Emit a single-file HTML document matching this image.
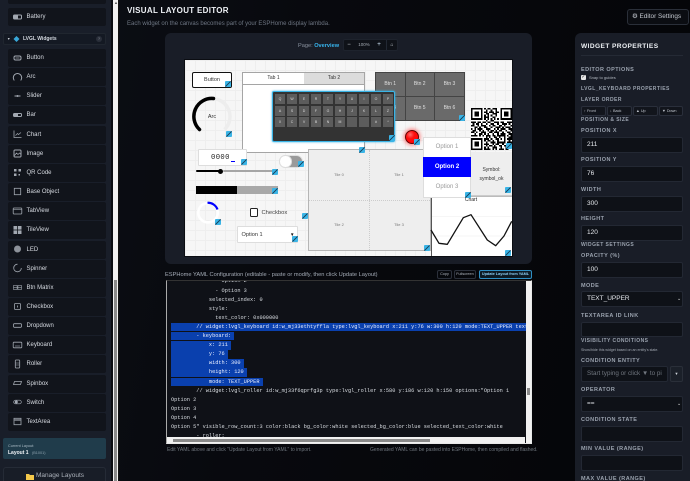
<!DOCTYPE html>
<html><head><meta charset="utf-8">
<style>
*{box-sizing:border-box}
html,body{margin:0;padding:0;width:690px;height:481px;overflow:hidden;background:#06070b;font-family:"Liberation Sans",sans-serif}
#r{position:relative;width:690px;height:481px;overflow:hidden;background:linear-gradient(100deg,#0c1016 0,#08090e 40%,#040508 100%);filter:blur(.22px)}
.a,.t,.h{position:absolute}
.t{line-height:10px;height:10px;white-space:nowrap}
.c{text-align:center}
#side{left:0;top:0;width:111px;height:481px;background:#191e29}
.row{position:absolute;left:8px;width:98px;height:18px;background:#11141b;border-radius:2px;color:#d6dae1;font-size:6px;line-height:18px;padding-left:18.5px}
.h{width:6px;height:6px;background:linear-gradient(135deg,#3ab4e6 0,#3ab4e6 42%,#1c4a66 42%,#1c4a66 58%,#3ab4e6 58%,#3ab4e6 100%);border-radius:1px;z-index:9;margin:-3px 0 0 -3px}
.tile{position:absolute;color:#777;font-size:4px;line-height:6px;width:40px;margin-left:-20px;text-align:center}
.key{position:absolute;width:10px;height:10px;background:#5c5c5c;color:#ddd;font-size:3.5px;line-height:10px;text-align:center}
.bm{position:absolute;background:#6a6a6a;color:#e0e0e0;font-size:5px;text-align:center}
.lab{color:#9aa2ae;font-size:5.5px;font-weight:bold;letter-spacing:.45px;left:581px}
.inp{position:absolute;left:581px;width:102px;background:#0e1117;border:1px solid #232833;border-radius:2px;color:#e4e7ec;font-size:6.5px;padding-left:5px}
.ob{position:absolute;top:106px;height:10px;background:#12151c;border:1px solid #2a2f3b;border-radius:2px;color:#bfc4cc;font-size:3.8px;line-height:8px;padding-left:2px}
.l{position:absolute;left:170px;height:9px;line-height:9px;white-space:pre;font-family:"Liberation Mono",monospace;font-size:5.27px;color:#d9dde2}
.s{background:#0a40ae;color:#e8eeff;display:inline-block;height:8.6px}
.yb{position:absolute;top:270px;height:9px;border:1px solid #2b303b;border-radius:2px;color:#aeb4bd;font-size:3.8px;line-height:7px;text-align:center}
</style></head><body><div id="r">

<!-- Sidebar -->
<div class="a" id="side"></div>
<div class="a" style="left:8px;top:0;width:98px;height:4px;background:#11141b;border-radius:0 0 2px 2px"></div>
<div class="a" style="left:111px;top:0;width:2px;height:481px;background:#0a0c11"></div>
<div class="a" style="left:113px;top:0;width:5px;height:481px;background:#f1f1f1"></div>
<div class="a" style="left:114px;top:280px;width:3px;height:201px;background:#8a8a8a"></div>
<div class="a" style="left:118px;top:0;width:1px;height:481px;background:#111"></div>
<div class="t" style="left:114px;top:-2px;font-size:4px;color:#555">▲</div>

<div class="row" style="top:8px">Battery</div>
<div class="a" style="left:3px;top:33px;width:103px;height:12px;background:#141923;border:1px solid #20262f;border-radius:2px"></div>
<div class="t" style="left:7px;top:34px;font-size:3.5px;color:#cfd4da">▼</div>
<svg class="a" style="left:13px;top:36px" width="7" height="6"><path d="M3.5 0L6.5 3 3.5 6 .5 3z" fill="#38a7d8"/></svg>
<div class="t" style="left:23px;top:34px;font-size:5px;font-weight:bold;color:#d2d7de">LVGL Widgets</div>
<div class="a" style="left:96px;top:36px;width:6px;height:6px;border-radius:3px;background:#2a2f3a;color:#8a909a;font-size:4px;line-height:6px;text-align:center">?</div>

<div class="row" style="top:49px">Button</div>
<div class="row" style="top:68.15px">Arc</div>
<div class="row" style="top:87.3px">Slider</div>
<div class="row" style="top:106.45px">Bar</div>
<div class="row" style="top:125.6px">Chart</div>
<div class="row" style="top:144.75px">Image</div>
<div class="row" style="top:163.9px">QR Code</div>
<div class="row" style="top:183.05px">Base Object</div>
<div class="row" style="top:202.2px">TabView</div>
<div class="row" style="top:221.35px">TileView</div>
<div class="row" style="top:240.5px">LED</div>
<div class="row" style="top:259.65px">Spinner</div>
<div class="row" style="top:278.8px">Btn Matrix</div>
<div class="row" style="top:297.95px">Checkbox</div>
<div class="row" style="top:317.1px">Dropdown</div>
<div class="row" style="top:336.25px">Keyboard</div>
<div class="row" style="top:355.4px">Roller</div>
<div class="row" style="top:374.55px">Spinbox</div>
<div class="row" style="top:393.7px">Switch</div>
<div class="row" style="top:412.85px">TextArea</div>

<svg class="a" style="left:0;top:0;z-index:3" width="111" height="481" fill="none" stroke="#a2a8b1" stroke-width="1">
<g transform="translate(17.5,17)"><rect x="-4" y="-2" width="8" height="4" rx="1"/><rect x="-3.5" y="-1.5" width="4" height="3" fill="#a2a8b1" stroke="none"/></g>
<g transform="translate(17.5,58)"><rect x="-3.5" y="-2" width="7" height="4" rx="1.5"/><path d="M-2 0h4" stroke-width=".7"/></g>
<g transform="translate(17.5,77)"><path d="M-3.2 3.4A4.2 4.2 0 1 1 3.2 3.4"/></g>
<g transform="translate(17.5,96)"><path d="M-3 0h6"/><circle cx="0" cy="0" r="1" fill="#a2a8b1" stroke="none"/></g>
<g transform="translate(17.5,115)"><rect x="-4" y="-1.5" width="8" height="3" rx="1"/><rect x="-3.5" y="-1" width="4" height="2" fill="#a2a8b1" stroke="none"/></g>
<g transform="translate(17.5,134)"><path d="M-3.5-3.5V3.5H4" stroke-width=".8"/><path d="M-2 1.5L0-.5 1 .5 3.5-1.5" stroke-width=".7"/></g>
<g transform="translate(17.5,153.5)"><rect x="-3.5" y="-3.5" width="7" height="7" rx="1"/><path d="M-3 2L-1-.5 .5 1 2-.5 3.5 1" stroke-width=".7"/></g>
<g transform="translate(17.5,172.5)" fill="#a2a8b1" stroke="none"><rect x="-3.5" y="-3.5" width="2.5" height="2.5"/><rect x="1" y="-3.5" width="2.5" height="2.5"/><rect x="-3.5" y="1" width="2.5" height="2.5"/><rect x="1" y="1.5" width="1.5" height="1.5"/></g>
<g transform="translate(17.5,191.5)"><rect x="-3.2" y="-3.2" width="6.4" height="6.4" stroke-width=".8"/></g>
<g transform="translate(17.5,211)"><rect x="-4.3" y="-3" width="8.6" height="6" rx=".7" stroke-width=".8"/><path d="M-4-1.5h8" stroke-width=".6"/></g>
<g transform="translate(17.5,230)" fill="#a2a8b1" stroke="none"><rect x="-4" y="-4" width="3.6" height="3.6"/><rect x=".4" y="-4" width="3.6" height="3.6"/><rect x="-4" y=".4" width="3.6" height="3.6"/><rect x=".4" y=".4" width="3.6" height="3.6"/></g>
<g transform="translate(17.5,249)"><circle r="3.5" fill="#8d929a" stroke="none"/></g>
<g transform="translate(17.5,268)"><path d="M0-3.8A3.8 3.8 0 1 0 3.8 0" stroke-width=".8"/></g>
<g transform="translate(17.5,287.5)" stroke-width=".6"><rect x="-4" y="-2" width="3.6" height="4"/><rect x=".4" y="-2" width="3.6" height="4"/><path d="M-4 0h8"/></g>
<g transform="translate(17.5,306.5)"><rect x="-3" y="-3" width="6" height="6" rx=".8" stroke-width=".8"/><path d="M0 1V-1" stroke-width=".8"/></g>
<g transform="translate(17.5,325.5)"><rect x="-4" y="-1.8" width="8" height="3.6" rx="1" stroke-width=".8"/></g>
<g transform="translate(17.5,345)"><rect x="-4.3" y="-2.8" width="8.6" height="5.6" rx=".7" stroke-width=".8"/><path d="M-2.5 1h5" stroke-width=".6"/></g>
<g transform="translate(17.5,364)"><rect x="-2.2" y="-4" width="4.4" height="8" rx=".7" stroke-width=".8"/><path d="M-2-1h4M-2 1h4" stroke-width=".5"/></g>
<g transform="translate(17.5,383)"><path d="M-3-1.5H4L3 1.5H-4z" stroke-width=".8"/></g>
<g transform="translate(17.5,402)"><rect x="-3.8" y="-1.8" width="7.6" height="3.6" rx="1.8" stroke-width=".7"/><circle cx="-1.2" r="1.5" fill="#a2a8b1" stroke="none"/></g>
<g transform="translate(17.5,421.5)"><rect x="-3.5" y="-3.2" width="7" height="6.4" stroke-width=".8"/><path d="M-3-1.5h6" stroke-width="1.2"/></g>
</svg>

<div class="a" style="left:3px;top:438px;width:103px;height:21px;background:#203c4b;border-radius:2px"></div>
<div class="t" style="left:8px;top:441px;font-size:3.8px;color:#a9bac4">Current Layout:</div>
<div class="t" style="left:8px;top:448px;font-size:5px;font-weight:bold;color:#eef2f5">Layout 1 <span style="font-weight:normal;font-size:3.8px;color:#8da2ae;margin-left:2px">(B1001)</span></div>
<div class="a" style="left:3px;top:467px;width:103px;height:20px;background:#181d27;border:1px solid #252b36;border-radius:3px"></div>
<svg class="a" style="left:26px;top:473px" width="8" height="7"><path d="M0 1h3l1 1h4v5H0z" fill="#f4c84a"/></svg>
<div class="t" style="left:36px;top:471px;font-size:6.5px;color:#aab0b9">Manage Layouts</div>

<!-- Header -->
<div class="t" style="left:127px;top:6px;font-size:8px;font-weight:bold;color:#eef1f5;letter-spacing:.3px">VISUAL LAYOUT EDITOR</div>
<div class="t" style="left:127px;top:19px;font-size:6px;color:#6d7582">Each widget on the canvas becomes part of your ESPHome display lambda.</div>

<!-- Center panel -->
<div class="a" style="left:165px;top:33px;width:367px;height:231px;background:#191d27;border-radius:6px"></div>
<div class="t" style="left:298px;top:40.5px;font-size:5.6px;color:#8b93a0">Page: <b style="color:#38b6f0">Overview</b></div>
<div class="a" style="left:343px;top:39px;width:55px;height:12px;background:#0f1218;border-radius:2px;border:1px solid #1e232d"></div>
<div class="t c" style="left:345px;top:40px;width:8px;font-size:6px;color:#cfd4da">−</div>
<div class="t c" style="left:355px;top:40px;width:18px;font-size:4.5px;color:#a5abb3">100%</div>
<div class="t c" style="left:375px;top:40px;width:8px;font-size:6.5px;color:#cfe4f5">+</div>
<div class="a" style="left:386px;top:40px;width:1px;height:10px;background:#222833"></div>
<div class="t c" style="left:388px;top:40px;width:8px;font-size:5px;color:#cfd4da">⌂</div>

<!-- Canvas -->
<div class="a" style="left:185px;top:60px;width:327px;height:196px;background-color:#f6f6f6;background-image:linear-gradient(#eeeeee 1px,transparent 1px),linear-gradient(90deg,#eeeeee 1px,transparent 1px);background-size:10px 10px;outline:1px solid #0b0d12"></div>

<!-- Button -->
<div class="a c" style="left:192px;top:72px;width:40px;height:16px;background:#fff;border:1px solid #111;border-bottom-width:1.5px;border-right-width:1.5px;border-radius:2px;color:#333;font-size:5.5px;line-height:14px">Button</div>
<div class="t c" style="left:192px;top:111.5px;width:40px;font-size:5.5px;color:#333">Arc</div>

<!-- Tabview -->
<div class="a" style="left:242px;top:72px;width:123px;height:81px;background:#fff;border:1px solid #a5a5a5"></div>
<div class="a c" style="left:243px;top:73px;width:61px;height:11px;background:#fff;color:#333;font-size:5px;line-height:11px">Tab 1</div>
<div class="a c" style="left:304px;top:73px;width:60px;height:11px;background:#dcdcdc;color:#333;font-size:5px;line-height:11px">Tab 2</div>
<div class="a" style="left:243px;top:84px;width:121px;height:1px;background:#a5a5a5"></div>

<!-- Btn matrix -->
<div class="a" style="left:375px;top:72px;width:90px;height:49px;background:#444"></div>
<div class="bm" style="left:376px;top:73px;width:28.5px;height:23px;line-height:23px">Btn 1</div>
<div class="bm" style="left:405.5px;top:73px;width:28.5px;height:23px;line-height:23px">Btn 2</div>
<div class="bm" style="left:435px;top:73px;width:29px;height:23px;line-height:23px">Btn 3</div>
<div class="bm" style="left:376px;top:97px;width:28.5px;height:23px;line-height:23px">Btn 4</div>
<div class="bm" style="left:405.5px;top:97px;width:28.5px;height:23px;line-height:23px">Btn 5</div>
<div class="bm" style="left:435px;top:97px;width:29px;height:23px;line-height:23px">Btn 6</div>

<!-- Keyboard -->
<div class="a" style="left:272px;top:91px;width:123px;height:51px;background:#333;border:1px solid #3ab4e6;border-radius:2px;box-shadow:0 0 2px #3ab4e6;z-index:2">
<div class="key" style="left:2px;top:2px">Q</div><div class="key" style="left:14px;top:2px">W</div><div class="key" style="left:26px;top:2px">E</div><div class="key" style="left:38px;top:2px">R</div><div class="key" style="left:50px;top:2px">T</div><div class="key" style="left:62px;top:2px">Y</div><div class="key" style="left:74px;top:2px">U</div><div class="key" style="left:86px;top:2px">I</div><div class="key" style="left:98px;top:2px">O</div><div class="key" style="left:110px;top:2px">P</div>
<div class="key" style="left:2px;top:13.5px">A</div><div class="key" style="left:14px;top:13.5px">S</div><div class="key" style="left:26px;top:13.5px">D</div><div class="key" style="left:38px;top:13.5px">F</div><div class="key" style="left:50px;top:13.5px">G</div><div class="key" style="left:62px;top:13.5px">H</div><div class="key" style="left:74px;top:13.5px">J</div><div class="key" style="left:86px;top:13.5px">K</div><div class="key" style="left:98px;top:13.5px">L</div><div class="key" style="left:110px;top:13.5px">Z</div>
<div class="key" style="left:2px;top:25px">X</div><div class="key" style="left:14px;top:25px">C</div><div class="key" style="left:26px;top:25px">V</div><div class="key" style="left:38px;top:25px">B</div><div class="key" style="left:50px;top:25px">N</div><div class="key" style="left:62px;top:25px">M</div><div class="key" style="left:74px;top:25px"></div><div class="key" style="left:86px;top:25px"></div><div class="key" style="left:98px;top:25px">#</div><div class="key" style="left:110px;top:25px">*</div>
</div>

<!-- LED -->
<div class="a" style="left:404.5px;top:130px;width:14px;height:14px;border-radius:50%;background:radial-gradient(circle at 35% 30%,#ff6a6a 0,#ff1010 35%,#f00 100%);border:.5px solid #600;box-shadow:0 0 4px 1px rgba(255,0,0,.55)"></div>

<!-- QR -->
<svg class="a" style="left:471px;top:108px;background:#fff" width="41" height="42" viewBox="0 0 25 25" preserveAspectRatio="none" shape-rendering="crispEdges">
<path fill-rule="evenodd" d="M0 0h7v7H0zM1 1v5h5V1zM2 2h3v3H2zM18 0h7v7h-7zM19 1v5h5V1zM20 2h3v3h-3zM0 18h7v7H0zM1 19v5h5v-5zM2 20h3v3H2z"/>
<path stroke="#000" stroke-width="1" fill="none" d="M8 .5h1M10 .5h2M13 .5h3M9 1.5h1M12 1.5h1M15 1.5h1M8 2.5h2M11 2.5h3M15 2.5h2M9 3.5h2M13 3.5h3M8 4.5h1M10 4.5h1M12 4.5h1M15 4.5h1M8 5.5h3M13 5.5h2M8 6.5h1M10 6.5h1M12 6.5h1M14 6.5h1M16 6.5h1M9 7.5h1M12 7.5h2M0 8.5h3M4 8.5h2M7 8.5h2M10 8.5h2M14 8.5h3M18 8.5h2M22 8.5h3M1 9.5h1M3 9.5h2M6 9.5h1M9 9.5h1M12 9.5h2M16 9.5h1M19 9.5h3M23 9.5h1M0 10.5h2M4 10.5h1M6 10.5h3M11 10.5h1M13 10.5h2M17 10.5h2M20 10.5h1M24 10.5h1M2 11.5h2M5 11.5h1M8 11.5h2M12 11.5h1M15 11.5h3M19 11.5h1M21 11.5h3M0 12.5h1M2 12.5h1M4 12.5h3M9 12.5h3M14 12.5h1M16 12.5h1M18 12.5h3M23 12.5h2M1 13.5h2M5 13.5h1M7 13.5h1M10 13.5h1M12 13.5h2M15 13.5h1M17 13.5h2M21 13.5h1M24 13.5h1M0 14.5h2M3 14.5h1M6 14.5h3M11 14.5h2M14 14.5h3M19 14.5h1M22 14.5h2M2 15.5h1M5 15.5h2M8 15.5h1M10 15.5h1M13 15.5h1M16 15.5h1M18 15.5h3M23 15.5h2M0 16.5h4M5 16.5h1M7 16.5h1M9 16.5h3M13 16.5h2M16 16.5h5M22 16.5h1M24 16.5h1M9 17.5h1M11 17.5h1M14 17.5h2M17 17.5h1M20 17.5h1M23 17.5h2M8 18.5h3M12 18.5h1M15 18.5h2M18 18.5h1M20 18.5h1M22 18.5h3M8 19.5h1M10 19.5h2M13 19.5h1M16 19.5h1M20 19.5h1M23 19.5h1M9 20.5h1M12 20.5h3M16 20.5h5M22 20.5h3M8 21.5h3M13 21.5h1M15 21.5h2M19 21.5h1M22 21.5h1M9 22.5h1M11 22.5h2M14 22.5h1M17 22.5h2M20 22.5h3M24 22.5h1M8 23.5h1M10 23.5h1M13 23.5h3M18 23.5h1M21 23.5h1M23 23.5h2M8 24.5h4M13 24.5h1M15 24.5h1M17 24.5h3M21 24.5h2"/>
</svg>

<!-- Spinbox, switch, slider, bar -->
<div class="a" style="left:198px;top:149px;width:49px;height:17px;background:#fff;border:1px solid #ddd;border-radius:1px"></div>
<div class="t" style="left:211px;top:153px;font-family:'Liberation Mono',monospace;font-size:7.2px;color:#222;letter-spacing:.4px">0000</div>
<div class="a" style="left:231px;top:161px;width:4px;height:.8px;background:#00f"></div>
<div class="a" style="left:279px;top:155px;width:24px;height:13px;border-radius:6.5px;background:#9a9a9a;border:1px solid #e0e0e0"></div>
<div class="a" style="left:279px;top:155px;width:12.5px;height:12.5px;border-radius:50%;background:#fff;border:.5px solid #ddd"></div>
<div class="a" style="left:196px;top:170.2px;width:25px;height:1.8px;background:#000;border-radius:1px"></div>
<div class="a" style="left:223px;top:170.2px;width:52px;height:1.8px;background:#a5a5a5;border-radius:1px"></div>
<div class="a" style="left:218px;top:168.5px;width:5px;height:5px;border-radius:50%;background:#000"></div>
<div class="a" style="left:196px;top:186px;width:41px;height:8px;background:#000"></div>
<div class="a" style="left:237px;top:186px;width:41px;height:8px;background:#a8a8a8"></div>

<!-- Checkbox -->
<div class="a" style="left:249.5px;top:208px;width:8px;height:9px;background:#fff;border:1px solid #222;border-radius:1.5px"></div>
<div class="t" style="left:261.5px;top:207.5px;font-size:5.8px;color:#444">Checkbox</div>

<!-- Dropdown -->
<div class="a" style="left:237px;top:226px;width:61px;height:17px;background:#fff;border:1px solid #ddd;border-radius:1px"></div>
<div class="t" style="left:241.5px;top:229.5px;font-size:5.6px;color:#333">Option 1</div>
<div class="t" style="left:290px;top:229.5px;font-size:4.5px;color:#111">▼</div>

<!-- Tileview -->
<div class="a" style="left:308px;top:149px;width:123px;height:102px;background:#eee;border:1px solid #b5b5b5;z-index:1"></div>
<div class="a" style="left:309px;top:199.5px;width:121px;height:1px;border-top:1px dotted #ccc;z-index:1"></div>
<div class="a" style="left:369px;top:150px;width:1px;height:100px;border-left:1px dotted #ccc;z-index:1"></div>
<div class="tile" style="left:339px;top:172px;z-index:1">Tile 0</div>
<div class="tile" style="left:399px;top:172px;z-index:1">Tile 1</div>
<div class="tile" style="left:339px;top:222px;z-index:1">Tile 2</div>
<div class="tile" style="left:399px;top:222px;z-index:1">Tile 3</div>

<!-- Chart -->
<div class="a" style="left:431px;top:196px;width:81px;height:60px;background:#fff;border-left:1px solid #555;border-top:1px solid #bbb;z-index:1"></div>
<div class="t c" style="left:451px;top:195px;width:40px;font-size:5px;color:#222;z-index:4">Chart</div>

<!-- Symbol -->
<div class="a" style="left:471px;top:152px;width:41px;height:44px;background:#eee;border-bottom:1px solid #ccc;z-index:2"></div>
<div class="t c" style="left:471px;top:165px;width:41px;font-size:5px;color:#333;z-index:2">Symbol:</div>
<div class="t c" style="left:471px;top:173.5px;width:41px;font-size:5px;color:#333;z-index:2">symbol_ok</div>

<!-- Roller -->
<div class="a" style="left:423px;top:137px;width:48px;height:61px;background:#fff;border:1px solid #ddd;z-index:3"></div>
<div class="a" style="left:423px;top:157px;width:48px;height:20px;background:#00f;z-index:3"></div>
<div class="t c" style="left:423px;top:142px;width:48px;font-size:6px;color:#999;z-index:3">Option 1</div>
<div class="t c" style="left:423px;top:162px;width:48px;font-size:6px;font-weight:bold;color:#fff;z-index:3">Option 2</div>
<div class="t c" style="left:423px;top:182px;width:48px;font-size:6px;color:#999;z-index:3">Option 3</div>

<!-- Vector widgets -->
<svg class="a" style="left:0;top:0;z-index:2" width="690" height="481" fill="none">
<path d="M199.5 129.5A18 18 0 1 1 224.5 129.5" stroke="#ededed" stroke-width="3.5"/>
<path d="M199.5 129.5A18 18 0 0 1 213.5 98.5" stroke="#000" stroke-width="3.5" stroke-linecap="round"/>
<circle cx="208" cy="212.7" r="9.7" stroke="#fff" stroke-width="2.6"/>
<path d="M207.5 202.8A10 10 0 0 1 217.5 209.5" stroke="#00f" stroke-width="2.2"/>
<path d="M432 216.5H511M432 236H511" stroke="#eee" stroke-width=".6"/>
<polyline points="431,230 439,243.3 447.3,244.3 463.3,217.7 471,214.7 487.3,240 495.7,245.7 504,236 511.7,221.3" stroke="#111" stroke-width="1.3" stroke-linejoin="round"/>
</svg>

<!-- Handles -->
<div class="h" style="left:228.3px;top:84px"></div>
<div class="h" style="left:229.3px;top:134px"></div>
<div class="h" style="left:361.7px;top:150px"></div>
<div class="h" style="left:391.7px;top:138px"></div>
<div class="h" style="left:416.7px;top:142px"></div>
<div class="h" style="left:462px;top:118px"></div>
<div class="h" style="left:509.3px;top:146px"></div>
<div class="h" style="left:244px;top:162px"></div>
<div class="h" style="left:301px;top:164px"></div>
<div class="h" style="left:274.7px;top:172px"></div>
<div class="h" style="left:274.7px;top:190.7px"></div>
<div class="h" style="left:217.7px;top:221.7px"></div>
<div class="h" style="left:305px;top:215.7px"></div>
<div class="h" style="left:294.7px;top:239px"></div>
<div class="h" style="left:427.3px;top:247.7px"></div>
<div class="h" style="left:467.7px;top:194.7px"></div>
<div class="h" style="left:508.3px;top:190.3px"></div>
<div class="h" style="left:508.3px;top:253px"></div>

<!-- YAML header -->
<div class="t" style="left:165px;top:269.5px;font-size:5.7px;color:#a4abb6">ESPHome YAML Configuration (editable - paste or modify, then click Update Layout)</div>
<div class="yb" style="left:437px;width:15px">Copy</div>
<div class="yb" style="left:454px;width:22px">Fullscreen</div>
<div class="yb" style="left:479px;width:53px;border-color:#2f8fc4;color:#8fd0f5;font-weight:bold;background:#0c1a24">Update Layout from YAML</div>

<!-- YAML box -->
<div class="a" style="left:166px;top:280px;width:366px;height:164px;background:#0f1117;overflow:hidden;border:1px solid #e8e8e8;border-top-color:#333;border-left-color:#aaa">
<div class="a" style="left:-166px;top:-280px;width:525px;height:437px;overflow:hidden">
<div class="l" style="top:276px">              - Option 2</div>
<div class="l" style="top:285.5px">              - Option 3</div>
<div class="l" style="top:294.5px">            selected_index: 0</div>
<div class="l" style="top:303.5px">            style:</div>
<div class="l" style="top:312.5px">              text_color: 0x000000</div>
<div class="l" style="top:321.5px;width:355px"><span class="s" style="width:355px">        // widget:lvgl_keyboard id:w_mj33ethtyffla type:lvgl_keyboard x:211 y:76 w:300 h:120 mode:TEXT_UPPER textarea_id:""</span></div>
<div class="l" style="top:330.5px"><span class="s">        - keyboard: </span></div>
<div class="l" style="top:340px"><span class="s">            x: 211 </span></div>
<div class="l" style="top:349px"><span class="s">            y: 76 </span></div>
<div class="l" style="top:358px"><span class="s">            width: 300 </span></div>
<div class="l" style="top:367px"><span class="s">            height: 120 </span></div>
<div class="l" style="top:376.5px"><span class="s">            mode: TEXT_UPPER </span></div>
<div class="l" style="top:385.5px">        // widget:lvgl_roller id:w_mj33f6qprfg3p type:lvgl_roller x:580 y:186 w:120 h:150 options:"Option 1</div>
<div class="l" style="top:394.5px">Option 2</div>
<div class="l" style="top:403.5px">Option 3</div>
<div class="l" style="top:412.5px">Option 4</div>
<div class="l" style="top:421.5px">Option 5" visible_row_count:3 color:black bg_color:white selected_bg_color:blue selected_text_color:white</div>
<div class="l" style="top:430.5px">        - roller:</div>
</div>
</div>
<!-- YAML scrollbars -->
<div class="a" style="left:167px;top:437px;width:358px;height:6px;background:#f1f1f1"></div>
<div class="a" style="left:173px;top:438.5px;width:257px;height:3px;background:#8a8a8a"></div>
<div class="a" style="left:526px;top:281px;width:5px;height:162px;background:#f1f1f1"></div>
<div class="a" style="left:527px;top:388px;width:3px;height:7px;background:#8a8a8a"></div>
<div class="t" style="left:167px;top:445px;font-size:5px;color:#70777f">Edit YAML above and click "Update Layout from YAML" to import.</div>
<div class="t" style="left:370px;top:445px;font-size:5px;color:#70777f">Generated YAML can be pasted into ESPHome, then compiled and flashed.</div>

<!-- Right -->
<div class="a" style="left:627px;top:9px;width:62px;height:16px;border:1px solid #2a2f39;border-radius:3px;background:#0b0d12"></div>
<div class="t" style="left:632px;top:12px;font-size:6.4px;color:#c3c8cf">⚙ Editor Settings</div>
<div class="a" style="left:575px;top:33px;width:115px;height:448px;background:#191d27;border-radius:6px 0 0 0"></div>
<div class="t" style="left:581px;top:42px;font-size:6.6px;font-weight:bold;color:#eceff3;letter-spacing:.4px">WIDGET PROPERTIES</div>
<div class="a" style="left:581px;top:55px;width:102px;height:1px;background:#252a35"></div>
<div class="t lab" style="top:65px">EDITOR OPTIONS</div>
<div class="a" style="left:581px;top:75px;width:5px;height:5px;background:#e8e8e8;border-radius:1px;color:#222;font-size:5px;line-height:5px;text-align:center">✓</div>
<div class="t" style="left:589px;top:73px;font-size:4px;color:#b2b8c0">Snap to guides</div>
<div class="t lab" style="top:84px;font-size:5px">LVGL_KEYBOARD PROPERTIES</div>
<div class="t lab" style="top:95px;font-size:5px">LAYER ORDER</div>
<div class="ob" style="left:581px;width:25px">↑ Front</div>
<div class="ob" style="left:607px;width:25px">↓ Back</div>
<div class="ob" style="left:633px;width:25px">▲ Up</div>
<div class="ob" style="left:659px;width:24px">▼ Down</div>
<div class="t lab" style="top:115px;font-size:5px">POSITION &amp; SIZE</div>
<div class="t lab" style="top:126px">POSITION X</div>
<div class="inp" style="top:137px;height:16px;line-height:14px">211</div>
<div class="t lab" style="top:155px">POSITION Y</div>
<div class="inp" style="top:166px;height:16px;line-height:14px">76</div>
<div class="t lab" style="top:185px">WIDTH</div>
<div class="inp" style="top:196px;height:15.5px;line-height:13.5px">300</div>
<div class="t lab" style="top:214px">HEIGHT</div>
<div class="inp" style="top:225px;height:15.5px;line-height:13.5px">120</div>
<div class="t lab" style="top:240px;font-size:5px">WIDGET SETTINGS</div>
<div class="t lab" style="top:251px">OPACITY (%)</div>
<div class="inp" style="top:262px;height:15.5px;line-height:13.5px">100</div>
<div class="t lab" style="top:280.5px">MODE</div>
<div class="inp" style="top:291px;height:16px;line-height:14px">TEXT_UPPER</div>
<div class="t" style="left:677px;top:294px;font-size:5px;color:#ddd">⌄</div>
<div class="t lab" style="top:310.5px">TEXTAREA ID LINK</div>
<div class="inp" style="top:321.5px;height:15.5px"></div>
<div class="t lab" style="top:336px;font-size:5px">VISIBILITY CONDITIONS</div>
<div class="t" style="left:581px;top:345px;font-size:3.6px;color:#a3a9b2">Show/hide this widget based on an entity's state.</div>
<div class="t lab" style="top:356px">CONDITION ENTITY</div>
<div class="inp" style="top:366px;height:16px;width:87px;line-height:14px;color:#70767f;font-size:6.3px;overflow:hidden;white-space:nowrap">Start typing or click ▼ to pi</div>
<div class="a" style="left:670px;top:366px;width:13px;height:16px;background:#1b2029;border:1px solid #2a2f39;border-radius:2px;color:#cfd4da;font-size:4px;line-height:14px;text-align:center">▼</div>
<div class="t lab" style="top:385px">OPERATOR</div>
<div class="inp" style="top:396px;height:16px;line-height:14px">==</div>
<div class="t" style="left:677px;top:399px;font-size:5px;color:#ddd">⌄</div>
<div class="t lab" style="top:415px">CONDITION STATE</div>
<div class="inp" style="top:426px;height:16px"></div>
<div class="t lab" style="top:444px">MIN VALUE (RANGE)</div>
<div class="inp" style="top:455px;height:16px"></div>
<div class="t lab" style="top:474px">MAX VALUE (RANGE)</div>

</div></body></html>
